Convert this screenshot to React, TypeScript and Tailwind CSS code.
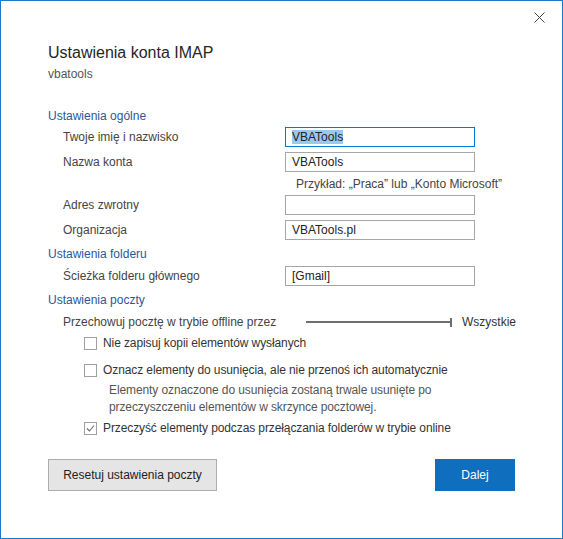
import { useState } from "react";

const FONT = { fontFamily: '"Segoe UI", "Liberation Sans", Arial, sans-serif' };

function Field({
  label,
  value,
  focused,
  className = "",
}: {
  label: string;
  value: string;
  focused?: boolean;
  className?: string;
}) {
  return (
    <div className={`flex h-[20px] items-center ${className}`}>
      <span className="w-[237px] pl-[15px] text-[12px] text-[#444]">{label}</span>
      <div
        className={`flex h-[20px] w-[190px] items-center border px-[6px] text-[12px] text-[#222] ${
          focused ? "border-[#0078d7]" : "border-[#a6a6a6]"
        }`}
      >
        {focused ? <span className="bg-[#99c9ef] leading-[14px]">{value}</span> : value}
      </div>
    </div>
  );
}

function Section({ title, className = "" }: { title: string; className?: string }) {
  return (
    <div className={`flex h-[16px] items-center text-[12px] text-[#2b579a] ${className}`}>
      {title}
    </div>
  );
}

function Check({
  checked,
  label,
  onToggle,
  className = "",
}: {
  checked: boolean;
  label: string;
  onToggle: () => void;
  className?: string;
}) {
  return (
    <label className={`flex h-[16px] cursor-default items-center pl-[36px] ${className}`}>
      <span
        onClick={onToggle}
        className="flex h-[13px] w-[13px] items-center justify-center border border-[#a0a0a0] bg-white"
      >
        {checked && (
          <svg width="9" height="9" viewBox="0 0 9 9">
            <path d="M1 4.5 L3.5 7 L8 1.5" fill="none" stroke="#6b6b6b" strokeWidth="1.1" />
          </svg>
        )}
      </span>
      <span className="ml-[6px] text-[12px] tracking-[-0.1px] text-[#333]">{label}</span>
    </label>
  );
}

export default function App() {
  const [noCopy, setNoCopy] = useState(false);
  const [markDelete, setMarkDelete] = useState(false);
  const [purge, setPurge] = useState(true);

  return (
    <div
      style={FONT}
      className="flex h-[539px] w-[563px] flex-col border border-[#1979ca] bg-white"
    >
      <div className="flex h-[41px] justify-end pr-[17px] pt-[11px]">
        <svg width="11" height="11" viewBox="0 0 11 11">
          <path d="M0.5 0.5 L10.5 10.5 M10.5 0.5 L0.5 10.5" stroke="#444" strokeWidth="1" />
        </svg>
      </div>

      <div className="pl-[47px]">
        <div className="flex h-[22px] items-center text-[16px] text-[#262626]">
          Ustawienia konta IMAP
        </div>
        <div className="mt-[2px] flex h-[16px] items-center text-[12px] text-[#555]">
          vbatools
        </div>

        <Section title="Ustawienia ogólne" className="mt-[26px]" />
        <Field label="Twoje imię i nazwisko" value="VBATools" focused className="mt-[3px]" />
        <Field label="Nazwa konta" value="VBATools" className="mt-[5px]" />
        <div className="flex h-[23px] items-center pl-[248px] text-[12px] text-[#444]">
          Przykład: „Praca” lub „Konto Microsoft”
        </div>
        <Field label="Adres zwrotny" value="" />
        <Field label="Organizacja" value="VBATools.pl" className="mt-[5px]" />

        <Section title="Ustawienia folderu" className="mt-[6px]" />
        <Field label="Ścieżka folderu głównego" value="[Gmail]" className="mt-[4px]" />

        <Section title="Ustawienia poczty" className="mt-[6px]" />
        <div className="mt-[6px] flex h-[16px] items-center text-[12px] text-[#444]">
          <span className="w-[258px] pl-[15px]">Przechowuj pocztę w trybie offline przez</span>
          <div className="flex w-[146px] items-center">
            <div className="h-[2px] flex-1 bg-[#6e6e6e]" />
            <div className="h-[9px] w-[2px] bg-[#6e6e6e]" />
          </div>
          <span className="ml-[10px] text-[#333]">Wszystkie</span>
        </div>

        <Check
          checked={noCopy}
          onToggle={() => setNoCopy(!noCopy)}
          label="Nie zapisuj kopii elementów wysłanych"
          className="mt-[5px]"
        />
        <Check
          checked={markDelete}
          onToggle={() => setMarkDelete(!markDelete)}
          label="Oznacz elementy do usunięcia, ale nie przenoś ich automatycznie"
          className="mt-[11px]"
        />
        <div className="mt-[4px] pl-[61px] text-[12px] leading-[17px] tracking-[-0.1px] text-[#555]">
          Elementy oznaczone do usunięcia zostaną trwale usunięte po
          <br />
          przeczyszczeniu elementów w skrzynce pocztowej.
        </div>
        <Check
          checked={purge}
          onToggle={() => setPurge(!purge)}
          label="Przeczyść elementy podczas przełączania folderów w trybie online"
          className="mt-[4px]"
        />
      </div>

      <div className="mt-[23px] flex justify-between pl-[47px] pr-[47px]">
        <button className="h-[32px] w-[169px] border border-[#adadad] bg-[#e5e5e5] text-[12px] text-[#222]">
          Resetuj ustawienia poczty
        </button>
        <button className="h-[32px] w-[80px] bg-[#106ebe] text-[12px] text-white">Dalej</button>
      </div>
    </div>
  );
}
